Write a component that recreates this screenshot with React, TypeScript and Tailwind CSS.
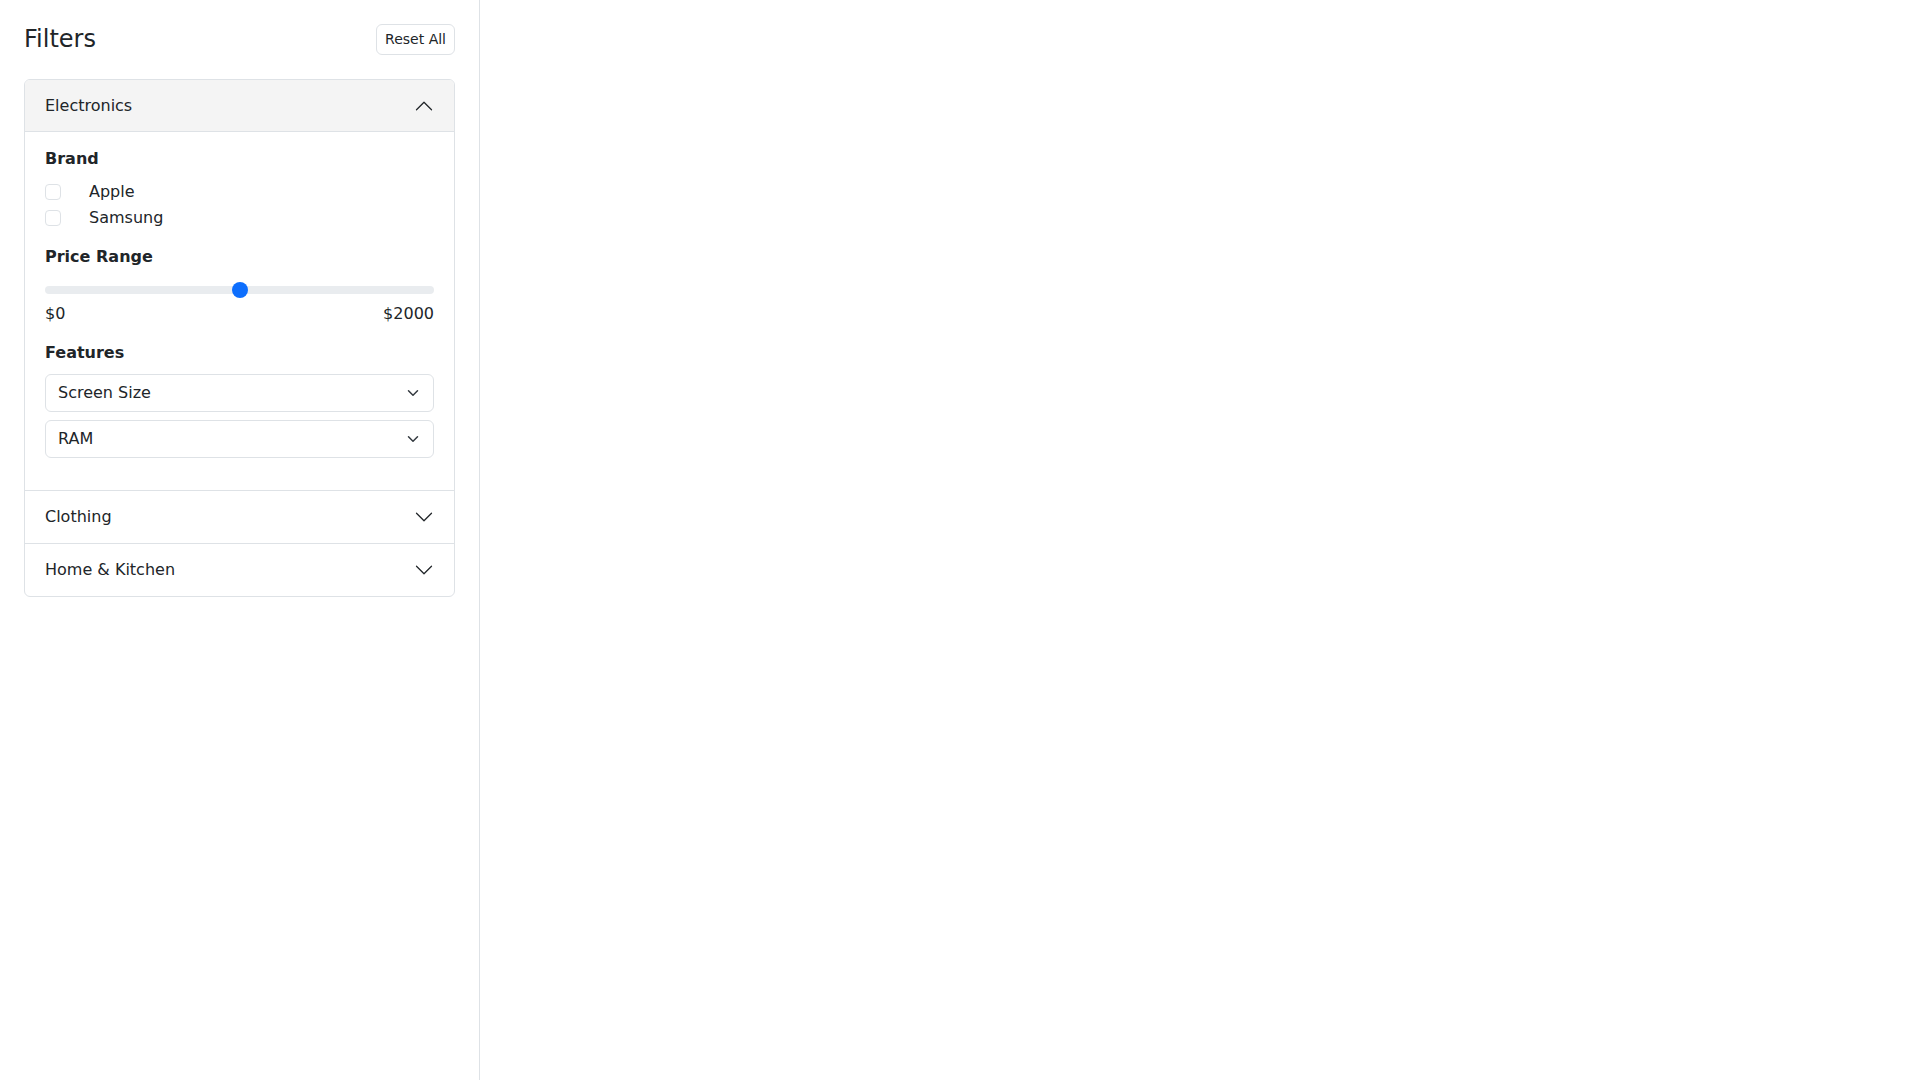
import { useState } from 'react';

const FONT = { fontFamily: '"DejaVu Sans", "Liberation Sans", sans-serif' };

function Chevron({ up }: { up?: boolean }) {
  return (
    <svg
      viewBox="0 0 16 16"
      className={`w-5 h-5 ${up ? 'rotate-180' : ''}`}
      fill="none"
      stroke="#212529"
      strokeLinecap="round"
      strokeLinejoin="round"
    >
      <path d="M2 5L8 11L14 5" />
    </svg>
  );
}

function SelectBox({ label, className = '' }: { label: string; className?: string }) {
  return (
    <div
      className={`h-[38px] flex items-center justify-between px-3 border border-[#dee2e6] rounded-md bg-white text-[#212529] ${className}`}
    >
      <span>{label}</span>
      <svg width="16" height="12" viewBox="0 0 16 16" fill="none" stroke="#343a40" strokeWidth="2" strokeLinecap="round" strokeLinejoin="round">
        <path d="m2 5 6 6 6-6" />
      </svg>
    </div>
  );
}

export default function App() {
  const [open, setOpen] = useState('electronics');
  const [brands, setBrands] = useState<Record<string, boolean>>({});

  const toggle = (id: string) => setOpen(open === id ? '' : id);

  return (
    <div className="flex h-screen bg-white text-base text-[#212529]" style={FONT}>
      {/* Sidebar */}
      <aside className="w-[480px] h-screen border-r border-[#dee2e6] p-6">
        <div className="flex items-center justify-between mb-6">
          <h4 className="text-2xl leading-[1.2]">Filters</h4>
          <button className="px-2 py-1 text-sm leading-[21px] border border-[#dee2e6] rounded-md bg-white">
            Reset All
          </button>
        </div>

        <div className="border border-[#dee2e6] rounded-md overflow-hidden">
          {/* Electronics */}
          <button
            onClick={() => toggle('electronics')}
            className={`w-full flex items-center justify-between px-5 ${
              open === 'electronics' ? 'h-[52px] bg-[#f4f4f4] border-b border-[#dee2e6]' : 'h-[53px] border-b border-[#dee2e6]'
            }`}
          >
            <span>Electronics</span>
            <Chevron up={open === 'electronics'} />
          </button>
          {open === 'electronics' && (
            <div className="px-5 pt-[15px] pb-8 border-b border-[#dee2e6]">
              <h6 className="font-bold leading-6 mb-2">Brand</h6>
              {['Apple', 'Samsung'].map((b) => (
                <label key={b} className="h-[26px] flex items-center">
                  <span
                    onClick={() => setBrands({ ...brands, [b]: !brands[b] })}
                    className={`w-4 h-4 rounded border ${
                      brands[b] ? 'bg-[#0d6efd] border-[#0d6efd]' : 'border-[#dee2e6] bg-white'
                    }`}
                  />
                  <span className="ml-7 leading-6">{b}</span>
                </label>
              ))}

              <h6 className="font-bold leading-6 mt-[14px]">Price Range</h6>
              <div className="relative h-4 mt-[13px] flex items-center">
                <div className="w-full h-2 rounded-full bg-[#e9ecef]" />
                <div className="absolute left-1/2 top-0 -translate-x-1/2 w-4 h-4 rounded-full bg-[#0d6efd]" />
              </div>
              <div className="flex justify-between mt-1 leading-6">
                <span>$0</span>
                <span>$2000</span>
              </div>

              <h6 className="font-bold leading-6 mt-[15px]">Features</h6>
              <SelectBox label="Screen Size" className="mt-[9px]" />
              <SelectBox label="RAM" className="mt-2" />
            </div>
          )}

          {/* Clothing */}
          <button
            onClick={() => toggle('clothing')}
            className="w-full h-[53px] flex items-center justify-between px-5 border-b border-[#dee2e6]"
          >
            <span>Clothing</span>
            <Chevron up={open === 'clothing'} />
          </button>

          {/* Home & Kitchen */}
          <button
            onClick={() => toggle('home')}
            className="w-full h-[52px] flex items-center justify-between px-5"
          >
            <span>Home &amp; Kitchen</span>
            <Chevron up={open === 'home'} />
          </button>
        </div>
      </aside>

      <main className="flex-1" />
    </div>
  );
}
